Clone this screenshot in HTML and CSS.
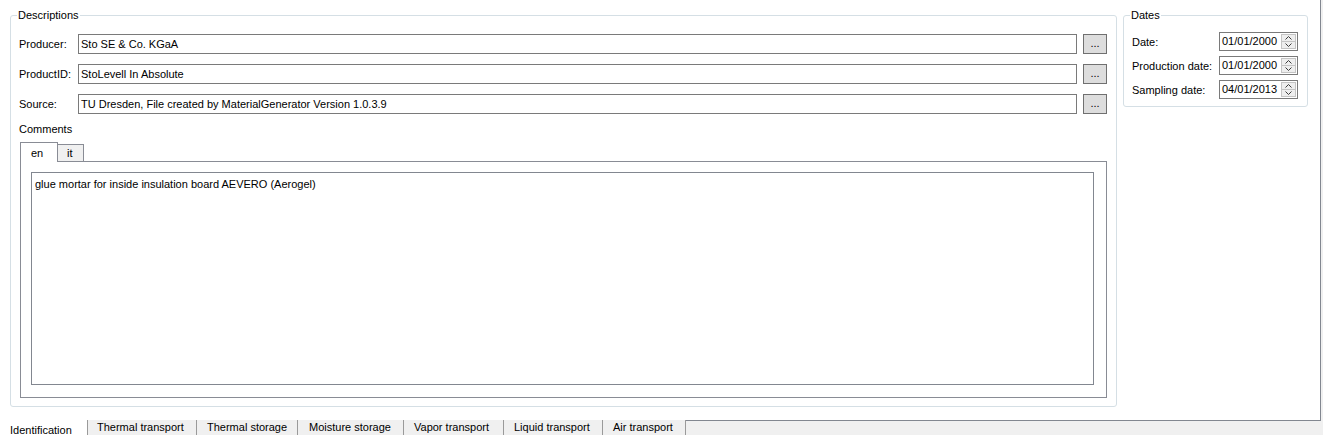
FILE: index.html
```html
<!DOCTYPE html>
<html>
<head>
<meta charset="utf-8">
<title>Material - Identification</title>
<link rel="stylesheet" href="styles.css">
</head>
<body>
<div class="window">
  <div class="page">
    <fieldset class="group group-desc">
      <legend>Descriptions</legend>
      <div class="form-row">
        <span class="form-label">Producer:</span>
        <div class="line-edit">Sto SE &amp; Co. KGaA</div>
        <button class="dots-btn">...</button>
      </div>
      <div class="form-row">
        <span class="form-label">ProductID:</span>
        <div class="line-edit">StoLevell In Absolute</div>
        <button class="dots-btn">...</button>
      </div>
      <div class="form-row">
        <span class="form-label">Source:</span>
        <div class="line-edit">TU Dresden, File created by MaterialGenerator Version 1.0.3.9</div>
        <button class="dots-btn">...</button>
      </div>
      <div class="comments-label">Comments</div>
      <div class="comments">
        <div class="lang-tabs">
          <div class="lang-tab active">en</div>
          <div class="lang-tab">it</div>
        </div>
        <div class="lang-pane">
          <div class="text-edit">glue mortar for inside insulation board AEVERO (Aerogel)</div>
        </div>
      </div>
    </fieldset>
    <fieldset class="group group-dates">
      <legend>Dates</legend>
      <div class="date-row">
        <span class="date-label">Date:</span>
        <div class="spin">
          <span class="spin-text">01/01/2000</span>
          <div class="spin-btns">
            <span class="spin-btn"><svg width="7" height="4" viewBox="0 0 7 4"><path d="M0.5 3.5 L3.5 0.5 L6.5 3.5" fill="none" stroke="#3c3c3c" stroke-width="1"/></svg></span>
            <span class="spin-btn"><svg width="7" height="4" viewBox="0 0 7 4"><path d="M0.5 0.5 L3.5 3.5 L6.5 0.5" fill="none" stroke="#3c3c3c" stroke-width="1"/></svg></span>
          </div>
        </div>
      </div>
      <div class="date-row">
        <span class="date-label">Production date:</span>
        <div class="spin">
          <span class="spin-text">01/01/2000</span>
          <div class="spin-btns">
            <span class="spin-btn"><svg width="7" height="4" viewBox="0 0 7 4"><path d="M0.5 3.5 L3.5 0.5 L6.5 3.5" fill="none" stroke="#3c3c3c" stroke-width="1"/></svg></span>
            <span class="spin-btn"><svg width="7" height="4" viewBox="0 0 7 4"><path d="M0.5 0.5 L3.5 3.5 L6.5 0.5" fill="none" stroke="#3c3c3c" stroke-width="1"/></svg></span>
          </div>
        </div>
      </div>
      <div class="date-row">
        <span class="date-label">Sampling date:</span>
        <div class="spin">
          <span class="spin-text">04/01/2013</span>
          <div class="spin-btns">
            <span class="spin-btn"><svg width="7" height="4" viewBox="0 0 7 4"><path d="M0.5 3.5 L3.5 0.5 L6.5 3.5" fill="none" stroke="#3c3c3c" stroke-width="1"/></svg></span>
            <span class="spin-btn"><svg width="7" height="4" viewBox="0 0 7 4"><path d="M0.5 0.5 L3.5 3.5 L6.5 0.5" fill="none" stroke="#3c3c3c" stroke-width="1"/></svg></span>
          </div>
        </div>
      </div>
    </fieldset>
  </div>
  <div class="page-tabs">
    <div class="page-tab active tab-ident">Identification</div>
    <div class="page-tab tab-thermal-transport">Thermal transport</div>
    <div class="page-tab tab-thermal-storage">Thermal storage</div>
    <div class="page-tab tab-moisture-storage">Moisture storage</div>
    <div class="page-tab tab-vapor">Vapor transport</div>
    <div class="page-tab tab-liquid">Liquid transport</div>
    <div class="page-tab tab-air">Air transport</div>
  </div>
</div>
</body>
</html>
```

FILE: styles.css
```css
* {
  box-sizing: border-box;
}

html, body {
  margin: 0;
  padding: 0;
}

body {
  width: 1323px;
  height: 435px;
  overflow: hidden;
  background: #f0f0f0;
  font-family: "Liberation Sans", Arial, sans-serif;
  font-size: 11px;
  line-height: 13px;
  color: #000;
}

.window {
  width: 1323px;
  height: 435px;
  display: flex;
  flex-direction: column;
}

.page {
  width: 1321px;
  height: 421px;
  flex: none;
  background: #fff;
  border-right: 1px solid #828790;
  border-bottom: 1px solid #828790;
  padding: 9px 0 0 10px;
  display: flex;
  align-items: flex-start;
  gap: 6px;
}

.group {
  margin: 0;
  border: 1px solid #d5dfe5;
  border-radius: 3px;
  min-width: 0;
}

.group legend {
  padding: 0 1px;
  margin-left: -2px;
  line-height: 13px;
}

.group-desc {
  width: 1107px;
  padding: 12px 9px 8px 8px;
}

.group-dates {
  width: 185px;
  padding: 10px 9px 7px 8px;
  display: flex;
  flex-direction: column;
  gap: 5px;
}

.form-row {
  display: flex;
  align-items: center;
  height: 20px;
  margin-bottom: 10px;
}

.form-label {
  width: 59px;
  flex: none;
  padding-top: 1px;
}

.line-edit {
  flex: 1;
  height: 20px;
  border: 1px solid #7a7a7a;
  padding: 3px 1px 0 2px;
  white-space: nowrap;
  overflow: hidden;
}

.dots-btn {
  flex: none;
  width: 24px;
  height: 20px;
  margin: 0 0 0 6px;
  padding: 0 0 1px 0;
  border: 1px solid #707070;
  background: #dddddd;
  font-family: "Liberation Sans", Arial, sans-serif;
  font-size: 11px;
  line-height: 13px;
  color: #000;
}

.comments-label {
  margin-top: -1px;
}

.comments {
  margin: 6px 0 0 1px;
  display: flex;
  flex-direction: column;
}

.lang-tabs {
  display: flex;
  align-items: flex-end;
  height: 19px;
}

.lang-tab {
  height: 17px;
  padding: 2px 0 0 9px;
  width: 26px;
  background: #f0f0f0;
  border: 1px solid #898c95;
  border-left: none;
  border-bottom: none;
}

.lang-tab.active {
  height: 20px;
  width: 38px;
  padding: 4px 0 0 10px;
  margin-bottom: -1px;
  background: #fff;
  border-left: 1px solid #898c95;
  position: relative;
  z-index: 1;
}

.lang-pane {
  height: 237px;
  border: 1px solid #898c95;
  padding: 10px 12px 12px 10px;
  display: flex;
}

.text-edit {
  flex: 1;
  border: 1px solid #828790;
  padding: 5px 3px;
}

.date-row {
  display: flex;
  align-items: center;
  height: 19px;
}

.date-label {
  width: 87px;
  flex: none;
  white-space: nowrap;
  padding-top: 1px;
}

.spin {
  width: 79px;
  height: 19px;
  border: 1px solid #7a7a7a;
  display: flex;
  align-items: stretch;
}

.spin-text {
  flex: 1;
  padding: 2px 0 0 2px;
  white-space: nowrap;
}

.spin-btns {
  width: 16px;
  padding: 1px 1px 1px 0;
  display: flex;
  flex-direction: column;
}

.spin-btn {
  flex: 1;
  display: flex;
  align-items: center;
  justify-content: center;
  border: 1px solid #c4c4c4;
  background: #eeeeee;
}

.spin-btn + .spin-btn {
  border-top: none;
}

.page-tabs {
  display: flex;
  margin-top: -1px;
  height: 15px;
}

.page-tab {
  flex: none;
  height: 20px;
  padding: 1px 0 0 10px;
  background: #f0f0f0;
  border-right: 1px solid #9a9a9a;
  white-space: nowrap;
}

.page-tab.active {
  background: #fff;
  padding: 4px 0 0 10px;
}

.tab-ident { width: 88px; }
.tab-thermal-transport { width: 109px; padding-left: 9px; }
.tab-thermal-storage { width: 101px; }
.tab-moisture-storage { width: 106px; padding-left: 11px; }
.tab-vapor { width: 100px; }
.tab-liquid { width: 99px; }
.tab-air { width: 83px; }
```
